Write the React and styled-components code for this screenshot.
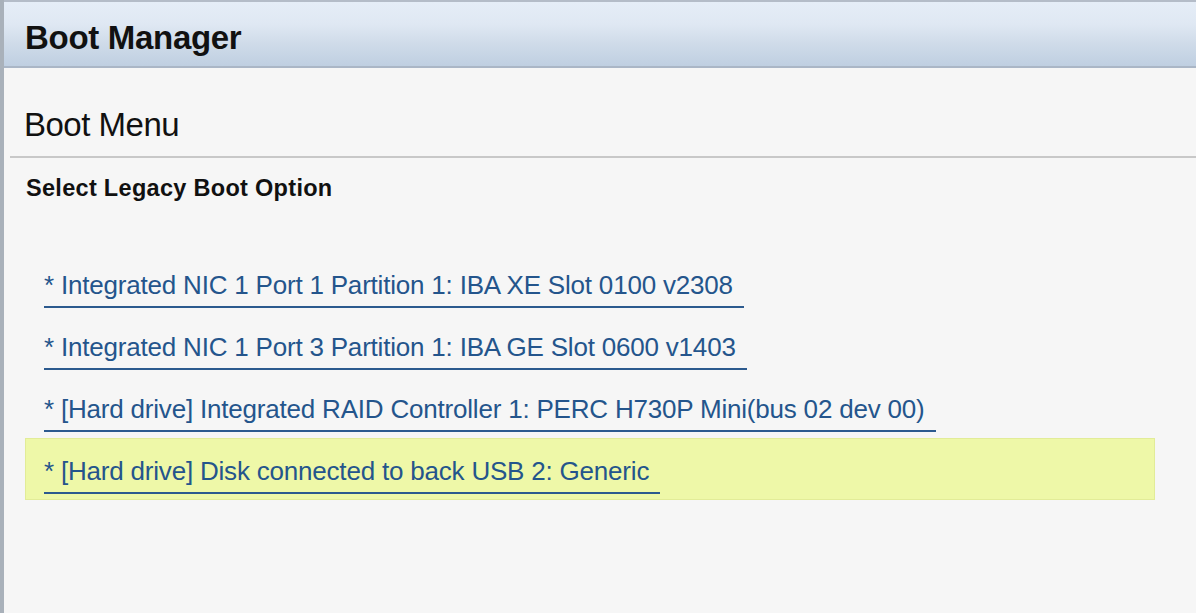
import styled, { createGlobalStyle } from 'styled-components';

const GlobalStyle = createGlobalStyle`
    html, body {
        margin: 0;
        padding: 0;
        background: #f6f6f6;
    }
    body {
        font-family: "Liberation Sans", Arial, sans-serif;
    }
`

const Frame = styled.div`
    width: 1196px;
    height: 613px;
    box-sizing: border-box;
    border-left: 4px solid #a9b1ba;
    background-color: #f6f6f6;
    overflow: hidden;
`

const Header = styled.header`
    height: 68px;
    box-sizing: border-box;
    border-top: 2px solid #b4bcc8;
    border-bottom: 2px solid #aab6c6;
    background: linear-gradient(to bottom, #e5edf7 0%, #dfe8f3 35%, #cfdbe9 65%, #bfcfe1 100%);
    display: flex;
    align-items: center;
    padding: 8px 0 0 21px;
`

const HeaderTitle = styled.h1`
    margin: 0;
    font-size: 33px;
    font-weight: bold;
    color: #111;
    letter-spacing: -0.3px;
`

const Content = styled.main`
    padding-left: 6px;
`

const SectionTitle = styled.h2`
    margin: 0;
    height: 90px;
    box-sizing: border-box;
    padding: 38px 0 0 14px;
    font-size: 33px;
    font-weight: normal;
    color: #111;
    letter-spacing: -0.5px;
    border-bottom: 2px solid #c8c8c8;
`

const SubTitle = styled.h3`
    margin: 0;
    padding: 17px 0 0 16px;
    font-size: 23.5px;
    font-weight: bold;
    color: #111;
    letter-spacing: 0.3px;
`

const OptionList = styled.ul`
    list-style: none;
    margin: 50px 0 0 15px;
    padding: 0;
    width: 1130px;
`

const OptionRow = styled.li`
    height: 62px;
    box-sizing: border-box;
    padding: 11px 0 0 18px;
    border: 1px solid ${props => props.selected ? '#e2ec98' : 'transparent'};
    background-color: ${props => props.selected ? '#eef8a8' : 'transparent'};
`

const OptionLink = styled.span`
    display: inline-block;
    font-size: 26px;
    line-height: 42px;
    color: #24558c;
    padding-right: 11px;
    border-bottom: 2px solid #2c5a8e;
    letter-spacing: -0.2px;
`

const options = [
    "* Integrated NIC 1 Port 1 Partition 1: IBA XE Slot 0100 v2308",
    "* Integrated NIC 1 Port 3 Partition 1: IBA GE Slot 0600 v1403",
    "* [Hard drive] Integrated RAID Controller 1: PERC H730P Mini(bus 02 dev 00)",
    "* [Hard drive] Disk connected to back USB 2: Generic",
]

const App = () => {
    return (
        <>
            <GlobalStyle />
            <Frame>
                <Header>
                    <HeaderTitle>Boot Manager</HeaderTitle>
                </Header>
                <Content>
                    <SectionTitle>Boot Menu</SectionTitle>
                    <SubTitle>Select Legacy Boot Option</SubTitle>
                    <OptionList>
                        {options.map((opt, i) => (
                            <OptionRow key={i} selected={i === 3}>
                                <OptionLink>{opt}</OptionLink>
                            </OptionRow>
                        ))}
                    </OptionList>
                </Content>
            </Frame>
        </>
    )
}

export default App;
